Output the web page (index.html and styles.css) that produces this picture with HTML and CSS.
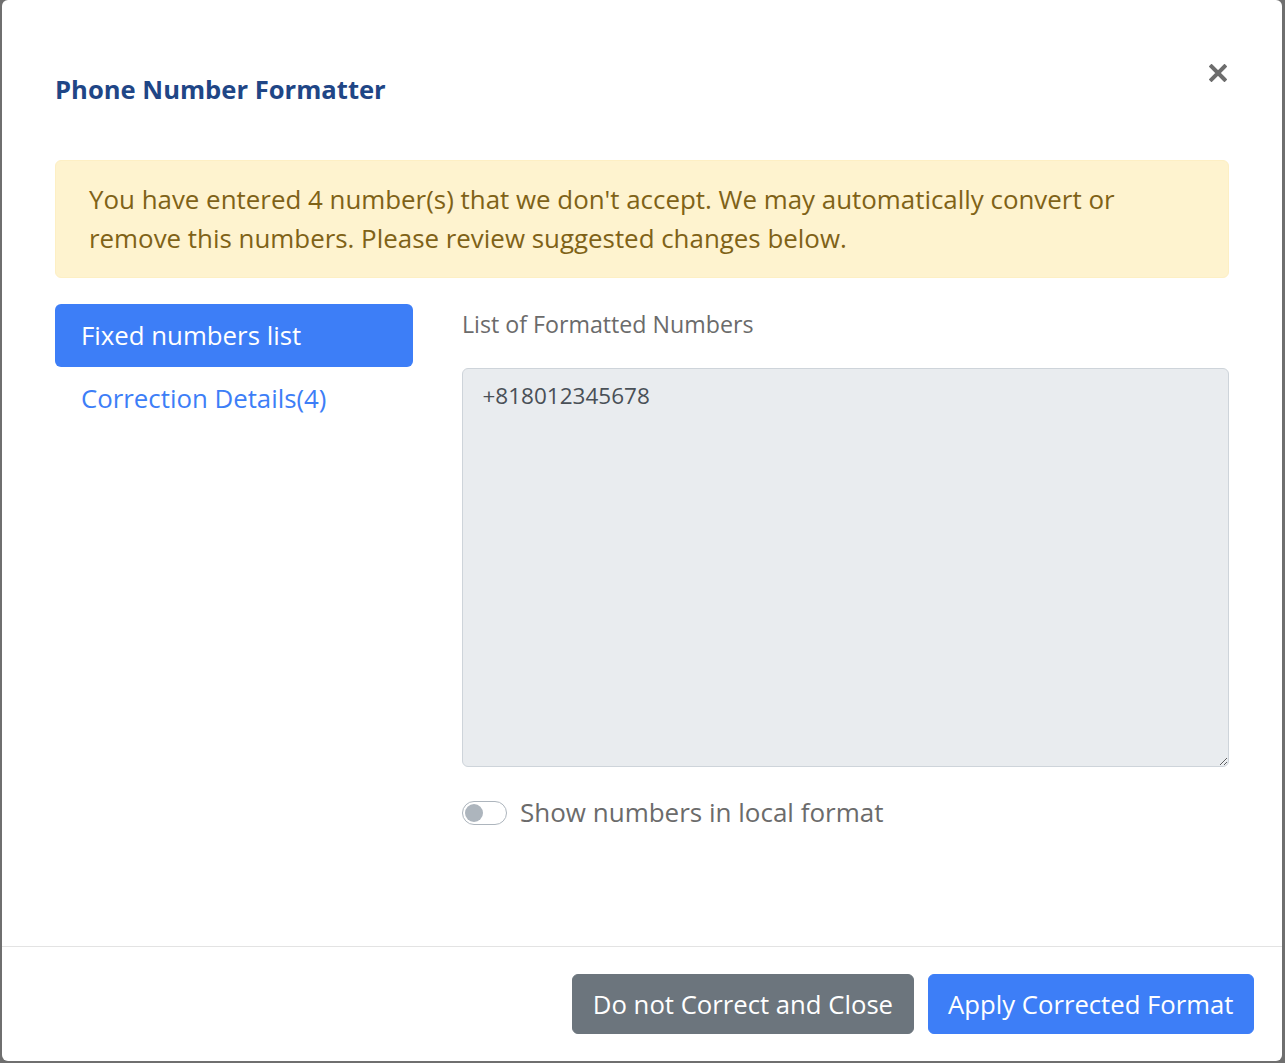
FILE: index.html
```html
<!DOCTYPE html>
<html lang="en">
<head>
<meta charset="utf-8">
<title>Phone Number Formatter</title>
<link rel="stylesheet" href="styles.css">
</head>
<body>
<div class="modal">
  <div class="modal-header">
    <h5 class="modal-title">Phone Number Formatter</h5>
    <button class="close" type="button" aria-label="Close">
      <svg width="18" height="18" viewBox="0 0 18 18"><path d="M2.5 2.5 L15.5 15.5 M15.5 2.5 L2.5 15.5" stroke="#6d6d6d" stroke-width="4" stroke-linecap="square" fill="none"/></svg>
    </button>
  </div>
  <div class="modal-body">
    <div class="alert">You have entered 4 number(s) that we don't accept. We may automatically convert or remove this numbers. Please review suggested changes below.</div>
    <div class="row">
      <nav class="pills">
        <a class="pill active">Fixed numbers list</a>
        <a class="pill">Correction Details(4)</a>
      </nav>
      <div class="pane">
        <label class="field-label">List of Formatted Numbers</label>
        <textarea class="numbers" readonly>+818012345678</textarea>
        <div class="switch-row">
          <span class="switch"><span class="knob"></span></span>
          <span class="switch-label">Show numbers in local format</span>
        </div>
      </div>
    </div>
  </div>
  <div class="modal-footer">
    <button class="btn btn-secondary" type="button">Do not Correct and Close</button>
    <button class="btn btn-primary" type="button">Apply Corrected Format</button>
  </div>
</div>
</body>
</html>
```

FILE: styles.css
```css
html, body {
  margin: 0;
  padding: 0;
  height: 100%;
}
body {
  background: #6f6f6f;
  font-family: "Open Sans", "Noto Sans", sans-serif;
  overflow: hidden;
}
.modal {
  box-sizing: border-box;
  margin: 0 3px 0 2px;
  height: 1061px;
  background: #fff;
  border-radius: 6px;
  display: flex;
  flex-direction: column;
}
.modal-header {
  display: flex;
  justify-content: space-between;
  align-items: flex-start;
  padding: 70px 55px 0 53px;
}
.modal-title {
  margin: 0;
  font-size: 25.6px;
  line-height: 39px;
  font-weight: 700;
  color: #1f4686;
}
.close {
  background: none;
  border: 0;
  padding: 0;
  margin-top: -6px;
  width: 18px;
  height: 18px;
  display: block;
}
.close svg { display: block; }
.modal-body {
  flex: 1;
  padding: 51px 53px 0 53px;
}
.alert {
  background: #fef3cf;
  border: 1px solid #fdefc4;
  color: #7f6217;
  border-radius: 6px;
  padding: 19px 33px;
  font-size: 25.9px;
  line-height: 39px;
  margin-bottom: 26px;
}
.row {
  display: grid;
  grid-template-columns: 358px 1fr;
  column-gap: 49px;
}
.pills {
  display: flex;
  flex-direction: column;
}
.pill {
  display: block;
  padding: 12px 26px;
  font-size: 25.8px;
  line-height: 39px;
  color: #3d7ef7;
  border-radius: 6px;
}
.pill.active {
  background: #3d7ef7;
  color: #fff;
}
.pane {
  display: flex;
  flex-direction: column;
}
.field-label {
  font-size: 23.2px;
  line-height: 34px;
  color: #6b6b6b;
  margin-top: 3px;
  margin-bottom: 27px;
}
.numbers {
  box-sizing: border-box;
  height: 399px;
  width: 100%;
  background: #e9ecef;
  border: 1px solid #ced4da;
  border-radius: 6px;
  padding: 10px 19.5px;
  font-family: "Open Sans", "Noto Sans", sans-serif;
  font-size: 22.5px;
  line-height: 34px;
  color: #495057;
  resize: vertical;
  outline: none;
  margin: 0;
  display: block;
}
.switch-row {
  display: flex;
  align-items: center;
  gap: 13px;
  margin-top: 26px;
}
.switch {
  box-sizing: border-box;
  width: 45px;
  height: 24px;
  border: 1px solid #adb5bd;
  border-radius: 12px;
  display: flex;
  align-items: center;
  padding-left: 2px;
}
.knob {
  width: 18px;
  height: 18px;
  border-radius: 50%;
  background: #adb5bd;
}
.switch-label {
  font-size: 26px;
  line-height: 39px;
  color: #6b6b6b;
}
.modal-footer {
  border-top: 1px solid #e3e3e3;
  display: flex;
  justify-content: flex-end;
  gap: 14px;
  padding: 27px 28px 27px 28px;
}
.btn {
  font-family: "Open Sans", "Noto Sans", sans-serif;
  font-size: 25.7px;
  line-height: 39px;
  padding: 9.5px 19.5px;
  border: 1px solid transparent;
  border-radius: 6px;
  color: #fff;
}
.btn-secondary {
  background: #6c757d;
  border-color: #6c757d;
}
.btn-primary {
  background: #3d7ef7;
  border-color: #3d7ef7;
}
```
